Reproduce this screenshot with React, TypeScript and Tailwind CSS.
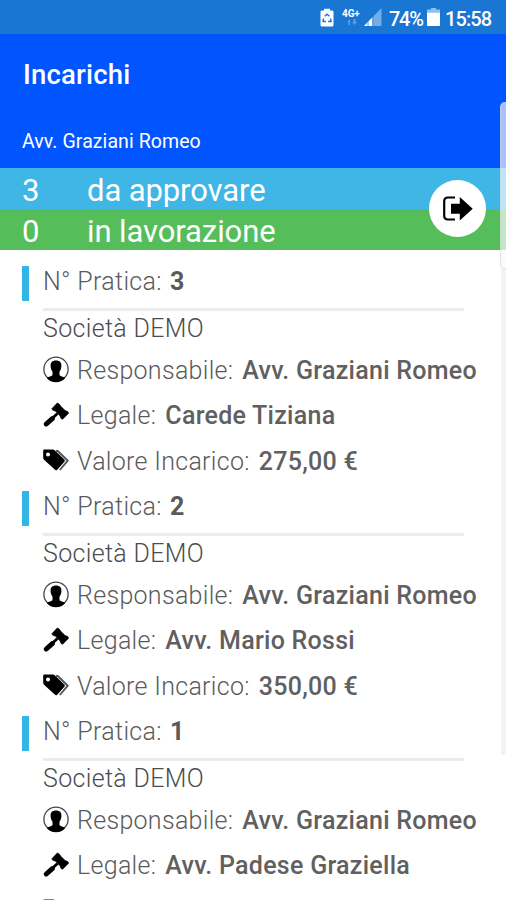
type Pratica = {
  numero: number;
  societa: string;
  responsabile: string;
  legale: string;
  valore?: string;
};

const PRATICHE: Pratica[] = [
  { numero: 3, societa: "Società DEMO", responsabile: "Avv. Graziani Romeo", legale: "Carede Tiziana", valore: "275,00 €" },
  { numero: 2, societa: "Società DEMO", responsabile: "Avv. Graziani Romeo", legale: "Avv. Mario Rossi", valore: "350,00 €" },
  { numero: 1, societa: "Società DEMO", responsabile: "Avv. Graziani Romeo", legale: "Avv. Padese Graziella" },
];

function UserIcon() {
  return (
    <svg width="26" height="27" viewBox="0 0 26 27" className="-mt-[1px] block">
      <circle cx="13" cy="13.2" r="12.1" fill="#fff" stroke="#444" strokeWidth="1.3" />
      <path d="M13 4.600c3.900 0 5.600 2.200 5.400 5.500-.1 2.600-.8 4.300-1.900 5.600v3.300c.4 1.200 3.800 1.600 5.600 2.900-2 2.600-5.500 4.300-9.100 4.300s-7.100-1.700-9.100-4.300c1.800-1.300 5.200-1.700 5.600-2.900v-3.300C8.400 14.400 7.700 12.700 7.600 10.100c-.2-3.300 1.500-5.500 5.400-5.500z" />
    </svg>
  );
}

function GavelIcon() {
  return (
    <svg width="26" height="26" viewBox="0 0 26 26" className="-mt-[1px] block">
      {/* head */}
      <path
        d="M14.300 1l1.900 1 1.600 2.300 4.300 4.300 2.700 1 .8 1.600-6 6-1.600-.8-.9-2.500-4.700-4.800-2.600-.8-.9-1.600z"
        stroke="#000"
        strokeWidth="0.7"
        strokeLinejoin="round"
      />
      {/* handle */}
      <path d="M14.500 11.500L9 16.500" stroke="#000" strokeWidth="3" />
      <path d="M9.300 16.600l-6 5.400" stroke="#000" strokeWidth="5" strokeLinecap="round" />
    </svg>
  );
}

function TagsIcon() {
  return (
    <svg width="26" height="23" viewBox="0 0 26 23" className="-mt-[1px] block">
      <path d="M13 1.900l1.700.1 10.100 9.700-8 9.300" fill="none" stroke="#555" strokeWidth="1.900" strokeLinejoin="round" />
      <path
        fillRule="evenodd"
        d="M1.500.600h8.300c.8 0 1.400.2 1.900.7l9.600 9.200c.7.700.7 1.500.1 2.200l-7.200 8c-.7.700-1.500.7-2.200.1L1.300 11.100C.6 10.500.2 9.800.2 9V1.900C.2 1.100.7.600 1.500.600zm3.500 2.900a2 2 0 1 0 0 4 2 2 0 0 0 0-4z"
      />
    </svg>
  );
}

function LogoutIcon() {
  return (
    <svg width="31" height="27" viewBox="0 0 31 27" className="block">
      <path d="M13 2.500H6C3.500 2.500 2.200 3.800 2.200 6.200v14.600c0 2.400 1.300 3.700 3.800 3.700h7" fill="none" stroke="#000" strokeWidth="2.200" />
      <path d="M9 8.800h8.800V2L30.700 13.800 17.800 25.400v-6.600H9z" />
    </svg>
  );
}

function StatusBar() {
  return (
    <div className="relative flex h-[34px] items-center bg-[#1976d2] text-white">
      <svg width="14" height="19" viewBox="0 0 14 19" className="ml-[320px] shrink-0">
        <path fill="#fff" d="M4 .8h6v1.700h2c.9 0 1.500.6 1.500 1.500v13c0 .9-.6 1.500-1.500 1.500H2c-.9 0-1.500-.6-1.500-1.500V4c0-.9.6-1.500 1.500-1.500h2z" />
        <path d="M4.700 8.300L7 6.200l2.400 2.100M3.500 10.500l-.4 3 2.800.1M10.500 10.500l.5 3-2.900.1" fill="none" stroke="#1976d2" strokeWidth="1.500" />
      </svg>
      <div className="ml-[8px] flex h-[19px] w-[20px] shrink-0 flex-col">
        <span className="text-[10px] leading-[11px] font-bold tracking-[-0.100px]">4G+</span>
        <svg width="14" height="7" viewBox="0 0 14 7" className="ml-[3px]">
          <path d="M3.500 6V3H2l3-3v6zM8.500 0v3H7l2.500 3L12 3h-1.500V0z" fill="#5b9fe2" />
        </svg>
      </div>
      <svg width="18" height="18" viewBox="0 0 18 18" className="ml-[2px] shrink-0">
        <path d="M17.500 0v18H0z" fill="#75aee7" />
        <path d="M8.500 9.200V18H0z" fill="#fff" />
        <path d="M4 13v5M8.800 8v10" stroke="#1976d2" strokeWidth="0.700" />
      </svg>
      <span className="ml-[7px] w-[38px] shrink-0 pt-[3px] text-[20px] leading-[24px] font-medium tracking-[-1.300px]">74%</span>
      <svg width="13" height="18" viewBox="0 0 13 18" className="shrink-0">
        <path d="M4 0h5v1.500h4v3H0v-3h4z" fill="#8fc0ee" />
        <path d="M0 4.500h13V17c0 .6-.4 1-1 1H1c-.6 0-1-.4-1-1z" fill="#fff" />
      </svg>
      <span className="ml-[5px] shrink-0 pt-[3px] text-[20px] leading-[24px] font-medium tracking-[-0.900px]">15:58</span>
    </div>
  );
}

function Riga({ icon, label, value }: { icon: React.ReactNode; label: string; value: string }) {
  return (
    <div className="flex h-[45.670px] items-center whitespace-nowrap">
      <div className="w-[34px] shrink-0">{icon}</div>
      <span className="pt-[2px] font-light tracking-[0.300px] text-[#5a5a5a]">{label}</span>
      <span className="ml-[9px] pt-[2px] font-medium tracking-[0.270px] text-[#606060]">{value}</span>
    </div>
  );
}

function PraticaCard({ pratica }: { pratica: Pratica }) {
  return (
    <div className="h-[225px] shrink-0 text-[25px] leading-[30px]">
      <div className="flex h-[49px] pt-[7px] pl-[22px] text-[#5a5a5a]">
        <div className="h-[35px] w-[7px] bg-[#33b5e5]" />
        <div className="ml-[14px] pt-[1px] font-light tracking-[0.330px]">N° Pratica:</div>
        <div className="ml-[8px] pt-[1px] font-bold">{pratica.numero}</div>
      </div>
      <div className="ml-[43px] h-[3px] w-[421px] bg-[#ebebeb]" />
      <div className="ml-[43px] h-[36px] pt-[3px] font-light tracking-[0.330px] text-[#4c4c4c]">{pratica.societa}</div>
      <div className="pl-[43px]">
        <Riga icon={<UserIcon />} label="Responsabile:" value={pratica.responsabile} />
        <Riga icon={<GavelIcon />} label="Legale:" value={pratica.legale} />
        {pratica.valore ? (
          <Riga icon={<TagsIcon />} label="Valore Incarico:" value={pratica.valore} />
        ) : (
          <div className="pt-[12px]">
            <TagsIcon />
          </div>
        )}
      </div>
    </div>
  );
}

export default function App() {
  return (
    <div className="relative h-[900px] w-[506px] overflow-hidden bg-white font-['Roboto',sans-serif]">
      <StatusBar />
      <header className="h-[134px] bg-[#0055ff] text-white">
        <h1 className="pt-[25px] pl-[23px] text-[27.5px] leading-[32px] font-medium tracking-[0.200px]">Incarichi</h1>
        <p className="pt-[39px] pl-[22px] text-[19.500px] leading-[24px] tracking-[0.080px]">Avv. Graziani Romeo</p>
      </header>

      <div className="text-[31px] leading-[41px] text-white">
        <div className="flex h-[41px] bg-[#40b6e6] pt-[2px] pl-[22px]">
          <span className="w-[65px]">3</span>
          <span className="tracking-[-0.100px]">da approvare</span>
        </div>
        <div className="flex h-[41px] bg-[#56bd5b] pt-[2px] pl-[22px]">
          <span className="w-[65px]">0</span>
          <span className="tracking-[-0.100px]">in lavorazione</span>
        </div>
      </div>

      <main className="pt-[9px]">
        {PRATICHE.map((pratica) => (
          <PraticaCard key={pratica.numero} pratica={pratica} />
        ))}
      </main>

      {/* floating logout button */}
      <button className="absolute top-[180px] left-[429px] flex h-[57px] w-[57px] items-center justify-center rounded-full bg-white">
        <LogoutIcon />
      </button>

      {/* edge panel handle and scroll track */}
      <div className="absolute top-[250px] right-0 h-[505px] w-[5px] bg-[#f3f3f3]" />
      <div className="absolute top-[102px] right-0 h-[167px] w-[6px] rounded-l-[5px] border-y border-l border-[#c8cdd4]/60 bg-white/65" />
    </div>
  );
}
